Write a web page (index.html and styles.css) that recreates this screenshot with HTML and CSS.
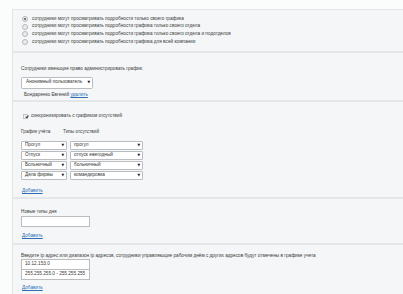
FILE: index.html
```html
<!DOCTYPE html>
<html lang="ru">
<head>
<meta charset="utf-8">
<link rel="stylesheet" href="styles.css">
</head>
<body>
<div class="panel">
  <section class="sec sec-radios">
    <label class="radio-row"><span class="radio checked"></span>сотрудники могут просматривать подробности только своего графика</label>
    <label class="radio-row"><span class="radio"></span>сотрудники могут просматривать подробности графика только своего отдела</label>
    <label class="radio-row"><span class="radio"></span>сотрудники могут просматривать подробности графика только своего отдела и подотделов</label>
    <label class="radio-row"><span class="radio"></span>сотрудники могут просматривать подробности графика для всей компании</label>
  </section>
  <section class="sec sec-admin">
    <div class="label">Сотрудники имеющие право администрировать график:</div>
    <div class="select w-admin"><span>Анонимный пользователь</span><i class="arrow">▼</i></div>
    <div class="person">Бондаренко Евгений <a class="link" href="#">удалить</a></div>
  </section>
  <section class="sec sec-sync">
    <label class="check-row"><span class="checkbox"></span>синхронизировать с графиком отсутствий</label>
    <div class="heads"><span class="h1">График учёта</span><span>Типы отсутствий</span></div>
    <div class="map">
      <div class="select"><span>Прогул</span><i class="arrow">▼</i></div>
      <div class="select"><span>прогул</span><i class="arrow">▼</i></div>
      <div class="select"><span>Отпуск</span><i class="arrow">▼</i></div>
      <div class="select"><span>отпуск ежегодный</span><i class="arrow">▼</i></div>
      <div class="select"><span>Больничный</span><i class="arrow">▼</i></div>
      <div class="select"><span>больничный</span><i class="arrow">▼</i></div>
      <div class="select"><span>Дела фирмы</span><i class="arrow">▼</i></div>
      <div class="select"><span>командировка</span><i class="arrow">▼</i></div>
    </div>
    <a class="link add" href="#">Добавить</a>
  </section>
  <section class="sec sec-types">
    <div class="label">Новые типы дня</div>
    <div class="input"></div>
    <a class="link add" href="#">Добавить</a>
  </section>
  <section class="sec sec-ip">
    <div class="label">Введите ip адрес или диапазон ip адресов, сотрудники управляющие рабочим днём с других адресов будут отмечены в графике учета</div>
    <div class="input">10.12.153.0</div>
    <div class="input">255.255.255.0 - 255.255.255</div>
    <a class="link add" href="#">Добавить</a>
  </section>
</div>
</body>
</html>
```

FILE: styles.css
```css
html, body {
  margin: 0;
  padding: 0;
  background: #fbfcfc;
}
body {
  font-family: "Liberation Sans", Arial, sans-serif;
  font-size: 4.7px;
  color: #3a3a3a;
  line-height: 1;
  white-space: nowrap;
}
.panel {
  margin: 9px 0 0 12px;
  border-top: 1px solid #e1e5e7;
  border-left: 1px solid #e1e5e7;
  background: #f4f6f7;
  height: 285px;
  overflow: hidden;
}
.sec {
  padding-left: 8px;
  border-bottom: 2px solid #e3e7e9;
}
.sec:last-child { border-bottom: none; }

/* section 1 */
.sec-radios {
  padding-top: 6px;
  height: 35px;
  display: flex;
  flex-direction: column;
  gap: 1.7px;
}
.radio-row {
  display: flex;
  align-items: center;
  height: 6px;
  padding-left: 1px;
}
.radio {
  width: 4px;
  height: 4px;
  border-radius: 50%;
  border: 0.5px solid #b5b9bc;
  background: #e9ebec;
  margin-right: 4px;
  position: relative;
  flex: none;
}
.radio.checked::after {
  content: "";
  position: absolute;
  left: 1px; top: 1px;
  width: 2px; height: 2px;
  border-radius: 50%;
  background: #555;
}

/* section 2 */
.sec-admin {
  padding-top: 14px;
  height: 33px;
}
.label { margin-bottom: 5px; }
.select {
  box-sizing: border-box;
  height: 12px;
  background: #fff;
  border: 1px solid #b9bdc0;
  border-radius: 1.5px;
  display: flex;
  align-items: center;
  justify-content: space-between;
  padding: 0 2px 0 4px;
  color: #333;
}
.arrow {
  font-style: normal;
  font-family: "DejaVu Sans", sans-serif;
  font-size: 3.4px;
  color: #111;
  flex: none;
}
.w-admin { width: 72px; }
.person { margin-top: 4px; padding-left: 3px; }
.link { color: #2a6db5; text-decoration: underline; }

/* section 3 */
.sec-sync {
  padding-top: 12px;
  height: 83px;
}
.check-row { display: flex; align-items: center; padding-left: 2px; }
.checkbox {
  box-sizing: border-box;
  width: 5px; height: 5px;
  border: 0.5px solid #c2c6c9;
  background: #f0f1f2;
  margin-right: 3px;
  position: relative;
  flex: none;
}
.checkbox::after {
  content: "";
  position: absolute;
  left: 1.5px; top: 0.4px;
  width: 1.1px; height: 2.3px;
  border-right: 0.6px solid #333;
  border-bottom: 0.6px solid #333;
  transform: rotate(40deg);
}
.heads { margin-top: 11px; display: flex; }
.heads .h1 { width: 42px; }
.map {
  margin-top: 6px;
  display: grid;
  grid-template-columns: 46px 73px;
  column-gap: 3px;
  row-gap: 1px;
}
.map .select { height: 9px; border-radius: 1px; padding-left: 3px; }
.add { display: block; margin-top: 6px; padding-left: 1px; width: max-content; }
.sec-sync .add { margin-top: 9px; }

/* section 4 */
.sec-types {
  padding-top: 11px;
  height: 33px;
}
.sec-types .label { margin-bottom: 1px; }
.input {
  box-sizing: border-box;
  width: 69px;
  height: 11px;
  background: #fff;
  border: 1px solid #b9bdc0;
  padding-left: 3px;
  display: flex;
  align-items: center;
}
.sec-types .add { margin-top: 7px; }

/* section 5 */
.sec-ip { padding-top: 9px; }
.sec-ip .label { margin-bottom: 0; }
.sec-ip .input { height: 11px; }
.sec-ip .input + .input { margin-top: -1px; }
.sec-ip .add { margin-top: 6px; }
```
